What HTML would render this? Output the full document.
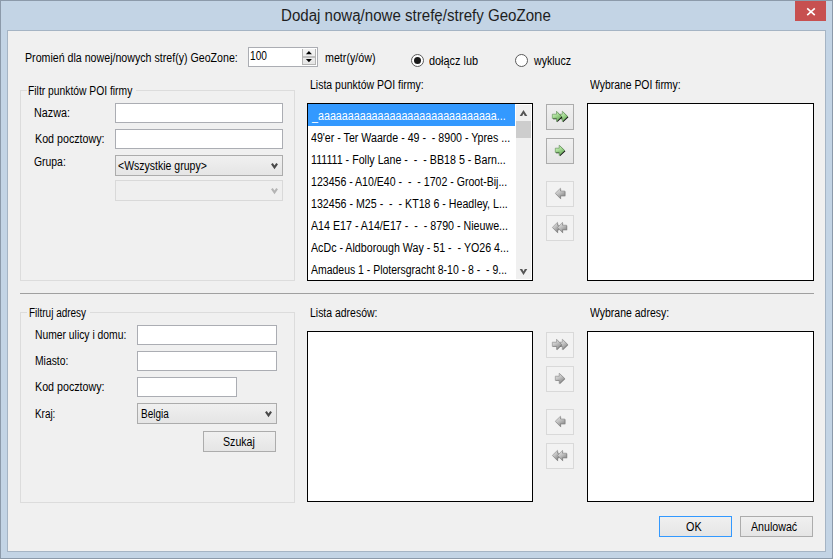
<!DOCTYPE html>
<html><head><meta charset="utf-8">
<style>
*{margin:0;padding:0;box-sizing:border-box}
html,body{width:833px;height:559px;overflow:hidden;background:#c3d4e5}
body{position:relative;font-family:"Liberation Sans",sans-serif;font-size:12px;color:#000}
.a{position:absolute}
.t{position:absolute;white-space:pre;line-height:13px;font-size:12px;transform-origin:0 0;color:#000}
.tb{position:absolute;background:#fff;border:1px solid #abadb3}
.grp{position:absolute;border:1px solid #dcdcdc}
.lb{position:absolute;background:#fff;border:1px solid #000}
.btn{position:absolute;border:1px solid #acacac;background:linear-gradient(#f0f0f0,#e5e5e5)}
.dbtn{position:absolute;border:1px solid #d9d9d9;background:#f2f2f2}
.cb{position:absolute;border:1px solid #acacac;background:linear-gradient(#f0f0f0,#e5e5e5)}
.cbd{position:absolute;border:1px solid #d9d9d9;background:#efefef}
svg{position:absolute;overflow:visible;z-index:1}
</style></head><body>
<div class="a" style="left:0;top:0;width:833px;height:559px;border:1px solid #8c9aaa;background:#c3d4e5"></div>
<div class="a" style="left:7px;top:30px;width:819px;height:522px;border:1px solid #a5b4c4;background:#f0f0f0"></div>
<div class="a" style="left:795px;top:1px;width:31px;height:20px;background:#c75050"></div>
<svg style="left:795px;top:1px" width="31" height="20"><path d="M12.2 7.4 L19.8 14.2 M19.8 7.4 L12.2 14.2" stroke="#fff" stroke-width="1.6"/></svg>

<!-- spinner -->
<div class="tb" style="left:248px;top:47px;width:70px;height:20px"></div>
<div class="a" style="left:302px;top:49px;width:14px;height:16px;border:1px solid #b4b4b4;border-top:none;background:linear-gradient(#f4f4f4,#e6e6e6)"></div>
<div class="a" style="left:303px;top:56px;width:12px;height:2px;background:#c0c0c0"></div>
<svg style="left:302px;top:49px" width="14" height="16"><path d="M3.9 5.3 L9.9 5.3 L6.9 2.1 Z" fill="#000"/><path d="M3.9 10 L9.9 10 L6.9 13.2 Z" fill="#000"/></svg>

<!-- radios -->
<div class="a" style="left:411px;top:54px;width:13px;height:13px;border:1px solid #5a5a5a;border-radius:50%;background:#fff"></div>
<div class="a" style="left:414px;top:57px;width:7px;height:7px;border-radius:50%;background:#1a1a1a"></div>
<div class="a" style="left:515px;top:54px;width:13px;height:13px;border:1px solid #5a5a5a;border-radius:50%;background:#fff"></div>

<!-- group 1 -->
<div class="grp" style="left:20px;top:90px;width:275px;height:191px"></div>
<div class="a" style="left:27px;top:88px;width:109px;height:5px;background:#f0f0f0"></div>
<div class="tb" style="left:115px;top:103px;width:168px;height:20px"></div>
<div class="tb" style="left:115px;top:129px;width:168px;height:20px"></div>
<div class="cb" style="left:115px;top:155px;width:168px;height:21px"></div>
<svg style="left:270px;top:162px" width="10" height="9"><path d="M1.9 1.6 L4.5 5.4 L7.1 1.6" fill="none" stroke="#484848" stroke-width="2.1"/></svg>
<div class="cbd" style="left:115px;top:180px;width:168px;height:21px"></div>
<svg style="left:270px;top:187px" width="10" height="9"><path d="M1.9 1.6 L4.5 5.4 L7.1 1.6" fill="none" stroke="#b4b4b4" stroke-width="2.1"/></svg>

<!-- list 1 -->
<div class="lb" style="left:307px;top:103px;width:226px;height:178px"></div>
<div class="a" style="left:308px;top:104px;width:207px;height:22px;background:#3399ff"></div>
<div class="a" style="left:516px;top:105px;width:15px;height:174px;background:#f0f0f0"></div>
<div class="a" style="left:516px;top:121px;width:15px;height:17px;background:#cdcdcd"></div>
<svg style="left:518px;top:108px" width="12" height="10"><path d="M1.7 8 L4.2 8 L5.5 5.6 L6.8 8 L9.3 8 L5.5 2 Z" fill="#555"/></svg>
<svg style="left:518px;top:268px" width="12" height="10"><path d="M1.7 1 L4.2 1 L5.5 3.4 L6.8 1 L9.3 1 L5.5 7 Z" fill="#555"/></svg>

<div class="lb" style="left:587px;top:103px;width:227px;height:178px"></div>

<div class="btn" style="left:546px;top:104px;width:28px;height:26px"></div>
<div class="btn" style="left:546px;top:138px;width:28px;height:26px"></div>
<div class="dbtn" style="left:546px;top:181px;width:28px;height:26px"></div>
<div class="dbtn" style="left:546px;top:215px;width:28px;height:26px"></div>

<svg width="0" height="0" style="left:0;top:0"><defs>
<linearGradient id="gg" x1="0" y1="0" x2="0.6" y2="1"><stop offset="0" stop-color="#dcf9cc"/><stop offset="0.45" stop-color="#ace09a"/><stop offset="1" stop-color="#68a85a"/></linearGradient>
<linearGradient id="gr" x1="0" y1="0" x2="0.6" y2="1"><stop offset="0" stop-color="#ececec"/><stop offset="0.5" stop-color="#c4c4c4"/><stop offset="1" stop-color="#8a8a8a"/></linearGradient>
</defs></svg>
<svg style="left:546px;top:104px" width="28" height="26"><path d="M14 10.2 L16.3 10.2 L16.3 7.2 L21.7 12.4 L16.3 17.6 L16.3 14.4 L14 14.4 Z" transform="translate(0.75,0.75)" fill="#000" opacity="0.9"/><path d="M14 10.2 L16.3 10.2 L16.3 7.2 L21.7 12.4 L16.3 17.6 L16.3 14.4 L14 14.4 Z" fill="url(#gg)" stroke="#5b8a52" stroke-width="0.6"/><path d="M6.3 10.2 L10.5 10.2 L10.5 7.2 L15.6 12.4 L10.5 17.6 L10.5 14.4 L6.3 14.4 Z" transform="translate(0.75,0.75)" fill="#000" opacity="0.9"/><path d="M6.3 10.2 L10.5 10.2 L10.5 7.2 L15.6 12.4 L10.5 17.6 L10.5 14.4 L6.3 14.4 Z" fill="url(#gg)" stroke="#5b8a52" stroke-width="0.6"/></svg>
<svg style="left:546px;top:138px" width="28" height="26"><path d="M9.3 10.2 L13.2 10.2 L13.2 7.2 L18.7 12.4 L13.2 17.6 L13.2 14.4 L9.3 14.4 Z" transform="translate(0.75,0.75)" fill="#000" opacity="0.9"/><path d="M9.3 10.2 L13.2 10.2 L13.2 7.2 L18.7 12.4 L13.2 17.6 L13.2 14.4 L9.3 14.4 Z" fill="url(#gg)" stroke="#5b8a52" stroke-width="0.6"/></svg>
<svg style="left:546px;top:181px" width="28" height="26"><path d="M18.8 10 L14.5 10 L14.5 7.2 L9.2 12.3 L14.5 17.7 L14.5 14.7 L18.8 14.7 Z" transform="translate(0.6,0.6)" fill="#555" opacity="0.7"/><path d="M18.8 10 L14.5 10 L14.5 7.2 L9.2 12.3 L14.5 17.7 L14.5 14.7 L18.8 14.7 Z" fill="url(#gr)" stroke="#8a8a8a" stroke-width="0.6"/></svg>
<svg style="left:546px;top:215px" width="28" height="26"><path d="M13 10.2 L11.5 10.2 L11.5 7.3 L6.3 12.4 L11.5 17.7 L11.5 14.6 L13 14.6 Z" transform="translate(0.6,0.6)" fill="#555" opacity="0.7"/><path d="M13 10.2 L11.5 10.2 L11.5 7.3 L6.3 12.4 L11.5 17.7 L11.5 14.6 L13 14.6 Z" fill="url(#gr)" stroke="#8a8a8a" stroke-width="0.6"/><path d="M20.6 10.2 L16.5 10.2 L16.5 7.3 L11.7 12.4 L16.5 17.7 L16.5 14.6 L20.6 14.6 Z" transform="translate(0.6,0.6)" fill="#555" opacity="0.7"/><path d="M20.6 10.2 L16.5 10.2 L16.5 7.3 L11.7 12.4 L16.5 17.7 L16.5 14.6 L20.6 14.6 Z" fill="url(#gr)" stroke="#8a8a8a" stroke-width="0.6"/></svg>
<svg style="left:546px;top:332px" width="28" height="26"><path d="M14 10.2 L16.3 10.2 L16.3 7.2 L21.7 12.4 L16.3 17.6 L16.3 14.4 L14 14.4 Z" transform="translate(0.6,0.6)" fill="#555" opacity="0.7"/><path d="M14 10.2 L16.3 10.2 L16.3 7.2 L21.7 12.4 L16.3 17.6 L16.3 14.4 L14 14.4 Z" fill="url(#gr)" stroke="#8a8a8a" stroke-width="0.6"/><path d="M6.3 10.2 L10.5 10.2 L10.5 7.2 L15.6 12.4 L10.5 17.6 L10.5 14.4 L6.3 14.4 Z" transform="translate(0.6,0.6)" fill="#555" opacity="0.7"/><path d="M6.3 10.2 L10.5 10.2 L10.5 7.2 L15.6 12.4 L10.5 17.6 L10.5 14.4 L6.3 14.4 Z" fill="url(#gr)" stroke="#8a8a8a" stroke-width="0.6"/></svg>
<svg style="left:546px;top:366px" width="28" height="26"><path d="M9.3 10.2 L13.2 10.2 L13.2 7.2 L18.7 12.4 L13.2 17.6 L13.2 14.4 L9.3 14.4 Z" transform="translate(0.6,0.6)" fill="#555" opacity="0.7"/><path d="M9.3 10.2 L13.2 10.2 L13.2 7.2 L18.7 12.4 L13.2 17.6 L13.2 14.4 L9.3 14.4 Z" fill="url(#gr)" stroke="#8a8a8a" stroke-width="0.6"/></svg>
<svg style="left:546px;top:409px" width="28" height="26"><path d="M18.8 10 L14.5 10 L14.5 7.2 L9.2 12.3 L14.5 17.7 L14.5 14.7 L18.8 14.7 Z" transform="translate(0.6,0.6)" fill="#555" opacity="0.7"/><path d="M18.8 10 L14.5 10 L14.5 7.2 L9.2 12.3 L14.5 17.7 L14.5 14.7 L18.8 14.7 Z" fill="url(#gr)" stroke="#8a8a8a" stroke-width="0.6"/></svg>
<svg style="left:546px;top:443px" width="28" height="26"><path d="M13 10.2 L11.5 10.2 L11.5 7.3 L6.3 12.4 L11.5 17.7 L11.5 14.6 L13 14.6 Z" transform="translate(0.6,0.6)" fill="#555" opacity="0.7"/><path d="M13 10.2 L11.5 10.2 L11.5 7.3 L6.3 12.4 L11.5 17.7 L11.5 14.6 L13 14.6 Z" fill="url(#gr)" stroke="#8a8a8a" stroke-width="0.6"/><path d="M20.6 10.2 L16.5 10.2 L16.5 7.3 L11.7 12.4 L16.5 17.7 L16.5 14.6 L20.6 14.6 Z" transform="translate(0.6,0.6)" fill="#555" opacity="0.7"/><path d="M20.6 10.2 L16.5 10.2 L16.5 7.3 L11.7 12.4 L16.5 17.7 L16.5 14.6 L20.6 14.6 Z" fill="url(#gr)" stroke="#8a8a8a" stroke-width="0.6"/></svg>
<div class="a" style="left:20px;top:293px;width:794px;height:1px;background:#a0a0a0"></div>

<!-- group 2 -->
<div class="grp" style="left:20px;top:312px;width:275px;height:191px"></div>
<div class="a" style="left:27px;top:310px;width:63px;height:5px;background:#f0f0f0"></div>
<div class="tb" style="left:137px;top:325px;width:140px;height:20px"></div>
<div class="tb" style="left:137px;top:351px;width:140px;height:20px"></div>
<div class="tb" style="left:137px;top:377px;width:100px;height:20px"></div>
<div class="cb" style="left:137px;top:403px;width:140px;height:21px"></div>
<svg style="left:264px;top:410px" width="10" height="9"><path d="M1.9 1.6 L4.5 5.4 L7.1 1.6" fill="none" stroke="#484848" stroke-width="2.1"/></svg>
<div class="btn" style="left:203px;top:431px;width:73px;height:21px"></div>

<div class="lb" style="left:307px;top:331px;width:226px;height:171px"></div>
<div class="lb" style="left:587px;top:331px;width:227px;height:171px"></div>

<div class="dbtn" style="left:546px;top:332px;width:28px;height:26px"></div>
<div class="dbtn" style="left:546px;top:366px;width:28px;height:26px"></div>
<div class="dbtn" style="left:546px;top:409px;width:28px;height:26px"></div>
<div class="dbtn" style="left:546px;top:443px;width:28px;height:26px"></div>

<div class="btn" style="left:659px;top:516px;width:73px;height:21px;border-color:#3399ff"></div>
<div class="btn" style="left:740px;top:516px;width:73px;height:21px"></div>
<div class="t" style="left:281.36px;top:6px;transform:scaleX(0.9423);font-size:16px;line-height:20px;color:#1e1e1e;">Dodaj nową/nowe strefę/strefy GeoZone</div>
<div class="t" style="left:25.20px;top:52px;transform:scaleX(0.8863);">Promień dla nowej/nowych stref(y) GeoZone:</div>
<div class="t" style="left:250.00px;top:50px;transform:scaleX(0.8453);">100</div>
<div class="t" style="left:324.70px;top:52px;transform:scaleX(0.8911);">metr(y/ów)</div>
<div class="t" style="left:428.90px;top:55px;transform:scaleX(0.9069);">dołącz lub</div>
<div class="t" style="left:533.58px;top:55px;transform:scaleX(0.8836);">wyklucz</div>
<div class="t" style="left:28.40px;top:85px;transform:scaleX(0.8595);">Filtr punktów POI firmy</div>
<div class="t" style="left:34.40px;top:107px;transform:scaleX(0.8972);">Nazwa:</div>
<div class="t" style="left:34.50px;top:133px;transform:scaleX(0.8918);">Kod pocztowy:</div>
<div class="t" style="left:33.90px;top:156px;transform:scaleX(0.8665);">Grupa:</div>
<div class="t" style="left:118.30px;top:160px;transform:scaleX(0.8761);">&lt;Wszystkie grupy&gt;</div>
<div class="t" style="left:309.60px;top:79px;transform:scaleX(0.8735);">Lista punktów POI firmy:</div>
<div class="t" style="left:589.60px;top:79px;transform:scaleX(0.8662);">Wybrane POI firmy:</div>
<div class="t" style="left:28.90px;top:307px;transform:scaleX(0.8313);">Filtruj adresy</div>
<div class="t" style="left:34.70px;top:329px;transform:scaleX(0.8609);">Numer ulicy i domu:</div>
<div class="t" style="left:34.90px;top:355px;transform:scaleX(0.8606);">Miasto:</div>
<div class="t" style="left:34.70px;top:381px;transform:scaleX(0.8918);">Kod pocztowy:</div>
<div class="t" style="left:34.70px;top:408px;transform:scaleX(0.8258);">Kraj:</div>
<div class="t" style="left:140.50px;top:408px;transform:scaleX(0.8313);">Belgia</div>
<div class="t" style="left:222.50px;top:436px;transform:scaleX(0.8854);">Szukaj</div>
<div class="t" style="left:309.60px;top:307px;transform:scaleX(0.8710);">Lista adresów:</div>
<div class="t" style="left:589.60px;top:307px;transform:scaleX(0.8730);">Wybrane adresy:</div>
<div class="t" style="left:685.90px;top:521px;transform:scaleX(0.9000);">OK</div>
<div class="t" style="left:751.20px;top:521px;transform:scaleX(0.8879);">Anulować</div>
<div class="t" style="left:311.89px;top:110px;transform:scaleX(0.8931);color:#fff;">_aaaaaaaaaaaaaaaaaaaaaaaaaaaaaa...</div>
<div class="t" style="left:311.00px;top:132px;transform:scaleX(0.8865);">49'er - Ter Waarde - 49 -  - 8900 - Ypres ...</div>
<div class="t" style="left:311.00px;top:154px;transform:scaleX(0.8895);">111111 - Folly Lane -  -  - BB18 5 - Barn...</div>
<div class="t" style="left:311.00px;top:176px;transform:scaleX(0.8807);">123456 - A10/E40 -  -  - 1702 - Groot-Bij...</div>
<div class="t" style="left:311.00px;top:198px;transform:scaleX(0.8870);">132456 - M25 -  -  - KT18 6 - Headley, L...</div>
<div class="t" style="left:311.00px;top:220px;transform:scaleX(0.8896);">A14 E17 - A14/E17 -  -  - 8790 - Nieuwe...</div>
<div class="t" style="left:311.00px;top:242px;transform:scaleX(0.8885);">AcDc - Aldborough Way - 51 -  - YO26 4...</div>
<div class="t" style="left:311.00px;top:264px;transform:scaleX(0.8720);">Amadeus 1 - Plotersgracht 8-10 - 8 -  - 9...</div>
</body></html>
